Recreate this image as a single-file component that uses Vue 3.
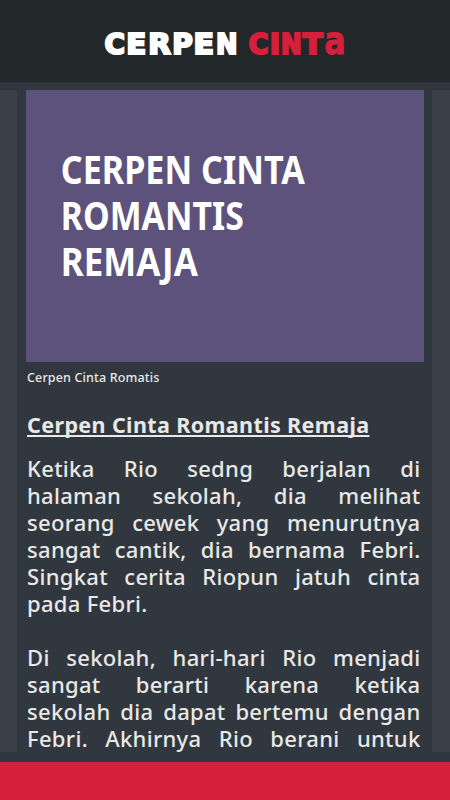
<script setup>
const logoWhite = [
  { c: 'C', x: 104.5, w: 20.5 }, { c: 'E', x: 126.3, w: 20 }, { c: 'R', x: 148.3, w: 22.5 },
  { c: 'P', x: 172.3, w: 20.5 }, { c: 'E', x: 193.6, w: 20.5 }, { c: 'N', x: 216, w: 21.5 }
]
const logoRed = [
  { c: 'C', x: 248.5, w: 20 }, { c: 'I', x: 269.8, w: 10.4 }, { c: 'N', x: 280.7, w: 21 },
  { c: 'T', x: 302.8, w: 20 }, { c: 'a', x: 324.3, w: 21.5 }
]
const banner = [
  { text: 'CERPEN CINTA', y: 183.7, width: 244 },
  { text: 'ROMANTIS', y: 229.7, width: 183 },
  { text: 'REMAJA', y: 275.5, width: 137 }
]
const paragraphs = [
  ['Ketika Rio sedng berjalan di', 'halaman sekolah, dia melihat', 'seorang cewek yang menurutnya', 'sangat cantik, dia bernama Febri.', 'Singkat cerita Riopun jatuh cinta', 'pada Febri.'],
  ['Di sekolah, hari-hari Rio menjadi', 'sangat berarti karena ketika', 'sekolah dia dapat bertemu dengan', 'Febri. Akhirnya Rio berani untuk']
]
</script>

<template>
  <div class="page">
    <header class="header">
      <svg class="logo" viewBox="0 0 450 82" aria-label="CERPEN CINTA">
        <text class="logo-white" y="53.7"><tspan v-for="l in logoWhite" :key="l.x" :x="l.x" :textLength="l.w" lengthAdjust="spacingAndGlyphs">{{ l.c }}</tspan></text>
        <text class="logo-red" y="53.7"><tspan v-for="l in logoRed" :key="l.x" :x="l.x" :class="{ tall: l.c === 'a' }" :textLength="l.w" lengthAdjust="spacingAndGlyphs">{{ l.c }}</tspan></text>
      </svg>
    </header>
    <main class="body">
      <aside class="rail"></aside>
      <article class="article">
        <div class="banner">
          <svg class="banner-art" viewBox="26 90 398 272">
            <text v-for="b in banner" :key="b.text" x="60.8" :y="b.y" :textLength="b.width" lengthAdjust="spacingAndGlyphs">{{ b.text }}</text>
          </svg>
        </div>
        <p class="caption">Cerpen Cinta Romatis</p>
        <h1 class="title"><span>Cerpen Cinta Romantis Remaja</span></h1>
        <p v-for="(p, i) in paragraphs" :key="i" class="paragraph">
          <span v-for="line in p" :key="line" class="line" :class="{ last: line === 'pada Febri.' }">{{ line }}</span>
        </p>
      </article>
      <aside class="rail"></aside>
    </main>
    <footer class="footer"></footer>
  </div>
</template>

<style>
body { margin: 0; background: #31373e; }
</style>
<style scoped>
.page { width: 450px; height: 800px; display: flex; flex-direction: column; overflow: hidden; background: #31373e; font-family: "Noto Sans", sans-serif; color: #e8e8e6; }
.header { height: 82px; flex: none; background: #22272a; border-bottom: 1px solid #2b3035; }
.logo { display: block; width: 450px; height: 82px; }
.logo text { font-family: "DejaVu Sans", sans-serif; font-weight: 700; font-size: 28.5px; stroke-width: 2.2px; stroke-linejoin: miter; }
.logo .tall { font-size: 39px; stroke-width: 1px; }
.logo-white { fill: #fff; stroke: #fff; }
.logo-red { fill: #d51f3b; stroke: #d51f3b; }
.body { height: 662px; flex: none; padding: 7px 0 10px; box-sizing: content-box; display: flex; }
.rail { width: 17px; height: 662px; flex: none; background: #3a4047; }
.rail:last-child { width: 18px; }
.article { width: 398px; flex: none; padding: 0 8px 0 9px; }
.banner { height: 272px; background: #5c527b; }
.banner-art { display: block; width: 398px; height: 272px; }
.banner-art text { font-size: 39px; font-weight: 700; fill: #fff; }
.caption { margin: 7px 0 0 1px; font-size: 12.5px; line-height: 18px; font-weight: 500; letter-spacing: .15px; white-space: nowrap; }
.title { margin: 24px 0 0; padding-left: 1px; font-size: 21.5px; line-height: 28px; font-weight: 700; letter-spacing: .38px; white-space: nowrap; }
.title span { text-decoration: underline; text-decoration-thickness: 1.5px; text-underline-offset: 2px; text-decoration-skip-ink: none; }
.paragraph { margin: 16px 0 0 1px; width: 393.5px; font-size: 22px; line-height: 27px; font-weight: 500; letter-spacing: .3px; }
.paragraph + .paragraph { margin-top: 27px; }
.line { display: block; white-space: nowrap; text-align: justify; text-align-last: justify; }
.line.last { text-align-last: left; }
.footer { height: 38px; flex: none; background: #d51f3b; }
</style>
